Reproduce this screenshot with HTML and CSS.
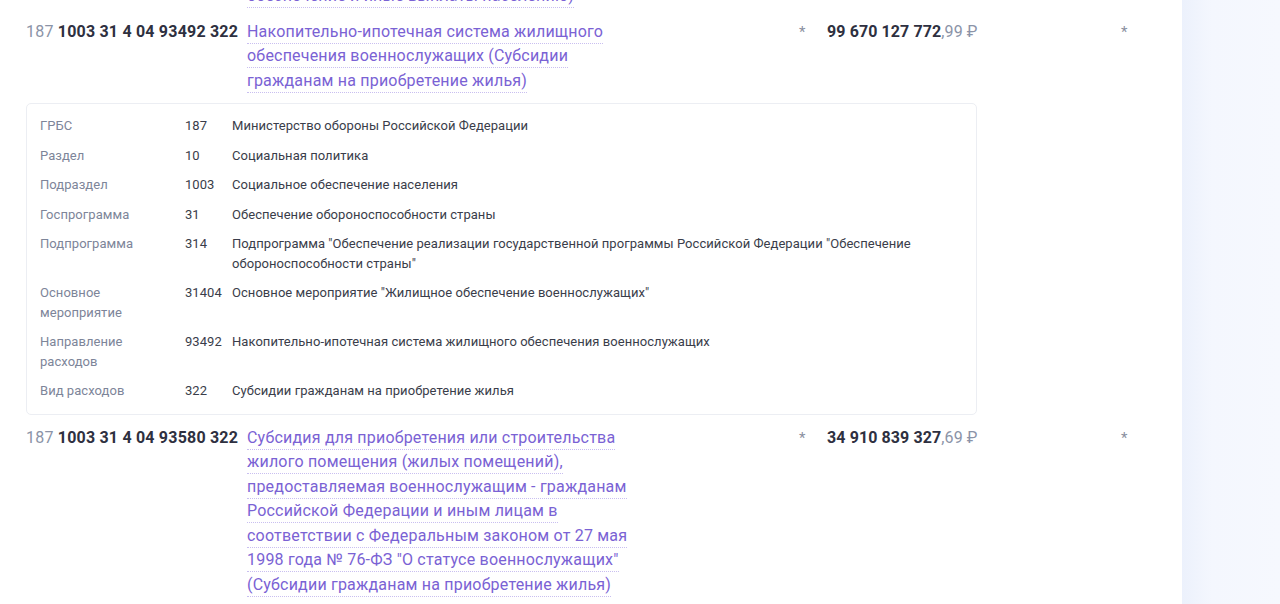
FILE: index.html
```html
<!DOCTYPE html>
<html lang="ru">
<head>
<meta charset="utf-8">
<title>Расходы</title>
<link rel="stylesheet" href="styles.css">
</head>
<body>
<div class="page">
  <main class="main">
    <div class="list">
      <div class="row">
        <div class="code"><span class="grbs">187</span> <b>1003 31 4 04 12345 321</b></div>
        <div class="title"><a class="link">Социальные выплаты гражданам, кроме<br>публичных нормативных выплат (Социальное<br>обеспечение и иные выплаты населению)</a></div>
        <div class="star">*</div>
        <div class="amount"><b>1 234 567 890</b><span class="cents">,00 ₽</span></div>
        <div class="star2">*</div>
      </div>

      <div class="row">
        <div class="code"><span class="grbs">187</span> <b>1003 31 4 04 93492 322</b></div>
        <div class="title"><a class="link">Накопительно-ипотечная система жилищного обеспечения военнослужащих (Субсидии гражданам на приобретение жилья)</a></div>
        <div class="star">*</div>
        <div class="amount"><b>99 670 127 772</b><span class="cents">,99 ₽</span></div>
        <div class="star2">*</div>
        <div class="card">
          <div class="lbl">ГРБС</div><div class="val">187</div><div class="txt">Министерство обороны Российской Федерации</div>
          <div class="lbl">Раздел</div><div class="val">10</div><div class="txt">Социальная политика</div>
          <div class="lbl">Подраздел</div><div class="val">1003</div><div class="txt">Социальное обеспечение населения</div>
          <div class="lbl">Госпрограмма</div><div class="val">31</div><div class="txt">Обеспечение обороноспособности страны</div>
          <div class="lbl">Подпрограмма</div><div class="val">314</div><div class="txt">Подпрограмма "Обеспечение реализации государственной программы Российской Федерации "Обеспечение обороноспособности страны"</div>
          <div class="lbl">Основное мероприятие</div><div class="val">31404</div><div class="txt">Основное мероприятие "Жилищное обеспечение военнослужащих"</div>
          <div class="lbl">Направление расходов</div><div class="val">93492</div><div class="txt">Накопительно-ипотечная система жилищного обеспечения военнослужащих</div>
          <div class="lbl">Вид расходов</div><div class="val">322</div><div class="txt">Субсидии гражданам на приобретение жилья</div>
        </div>
      </div>

      <div class="row">
        <div class="code"><span class="grbs">187</span> <b>1003 31 4 04 93580 322</b></div>
        <div class="title"><a class="link">Субсидия для приобретения или строительства жилого помещения (жилых помещений), предоставляемая военнослужащим - гражданам Российской Федерации и иным лицам в соответствии с Федеральным законом от 27 мая 1998 года № 76-ФЗ "О статусе военнослужащих" (Субсидии гражданам на приобретение жилья)</a></div>
        <div class="star">*</div>
        <div class="amount"><b>34 910 839 327</b><span class="cents">,69 ₽</span></div>
        <div class="star2">*</div>
      </div>
    </div>
  </main>
  <aside class="side"></aside>
</div>
</body>
</html>
```
FILE: styles.css
```css
* { box-sizing: border-box; }
html, body { margin: 0; padding: 0; height: 100%; overflow: hidden; }
body {
  font-family: Roboto, "Noto Sans", "Liberation Sans", sans-serif;
  color: #2e3040;
  background: #ffffff;
}
.page {
  display: flex;
  height: 604px;
  overflow: hidden;
}
.main {
  width: 1182px;
  flex: none;
  background: #ffffff;
  overflow: hidden;
}
.side {
  flex: 1;
  background: linear-gradient(to right, #ecf1fc 0px, #f4f7fe 30px, #f6f8fe 100%);
}
.list {
  margin-top: -76px;
  padding-left: 26px;
}
.row {
  display: grid;
  grid-template-columns: 221px 1fr 28px 150px 205px;
  padding-top: 11px;
  font-size: 16px;
  line-height: 24.5px;
  letter-spacing: 0.2px;
}
.code {
  white-space: nowrap;
}
.grbs { color: #8b93a7; }
.code b { font-weight: 700; color: #2e3040; }
.title { max-width: 392px; }
.link {
  color: #7a62d4;
  text-decoration: none;
  border-bottom: 1px dotted #c9bff0;
  padding-bottom: 2px;
}
.star {
  color: #8a8fa0;
  font-size: 15px;
}
.amount {
  text-align: right;
  white-space: nowrap;
  letter-spacing: 0.1px;
}
.amount b { font-weight: 700; color: #2e3040; }
.cents { color: #8b93a7; }
.star2 {
  color: #8a8fa0;
  font-size: 15px;
  padding-left: 144px;
}
.card {
  grid-column: 1 / 5;
  margin-top: 10px;
  border: 1px solid #eceef3;
  border-radius: 5px;
  padding: 12px 13px 13px 13px;
  display: grid;
  grid-template-columns: 145px 47px 1fr;
  row-gap: 10px;
  font-size: 13px;
  line-height: 19.5px;
  letter-spacing: 0.05px;
}
.lbl {
  color: #7d8599;
  padding-right: 16px;
}
.val { color: #3a3d4a; }
.txt { color: #3a3d4a; }
```
